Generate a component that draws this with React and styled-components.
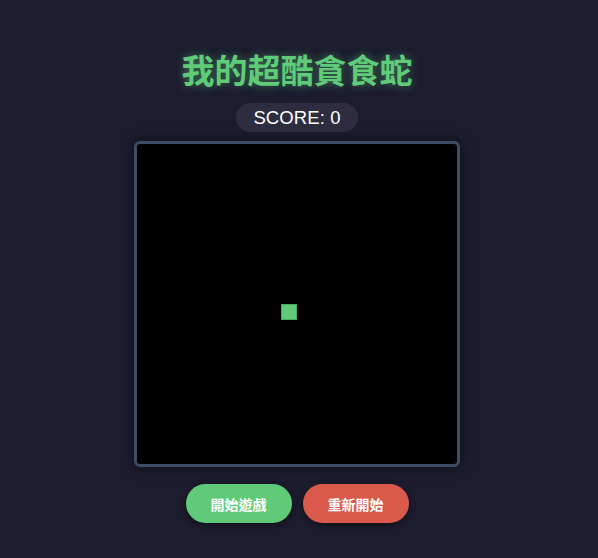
import React from "react";
import styled, { createGlobalStyle } from "styled-components";

const GlobalStyle = createGlobalStyle`
  html, body {
    margin: 0;
    padding: 0;
    background: #1c1c2e;
    font-family: "Liberation Sans", "Noto Sans CJK TC", sans-serif;
  }
`;

const Page = styled.div`
  display: flex;
  flex-direction: column;
  align-items: center;
  padding: 52px 4px 0 0;
  min-height: 558px;
  box-sizing: border-box;
`;

const Title = styled.h1`
  margin: 0;
  font-size: 33px;
  line-height: 39px;
  font-weight: 700;
  color: #5fcb79;
  text-shadow: 0 0 10px rgba(95, 203, 121, 0.5);
  font-family: "Liberation Sans", "Noto Sans CJK TC", sans-serif;
`;

const Score = styled.div`
  margin-top: 12px;
  height: 29px;
  padding: 0 17px;
  display: flex;
  align-items: center;
  border-radius: 15px;
  background: #2d2d3f;
  color: #ffffff;
  font-size: 18.5px;
  letter-spacing: 0.1px;
`;

const Board = styled.div`
  position: relative;
  margin-top: 9px;
  width: 320px;
  height: 320px;
  background: #000;
  border: 3px solid #3c4d66;
  border-radius: 6px;
  box-shadow: 0 0 14px rgba(0, 0, 0, 0.5);
`;

const Cell = styled.div`
  position: absolute;
  width: 16px;
  height: 16px;
  background: #5fcb79;
  box-shadow: inset 0 0 0 1px #4aa862;
`;

const Controls = styled.div`
  display: flex;
  gap: 11px;
  margin-top: 17px;
`;

const Button = styled.button`
  height: 39px;
  padding: 0 25px;
  border: none;
  border-radius: 20px;
  background: ${(p) => p.$bg};
  color: #fff;
  font-size: 14px;
  font-weight: 700;
  font-family: "Liberation Sans", "Noto Sans CJK TC", sans-serif;
  box-shadow: 0 2px 6px rgba(0, 0, 0, 0.45);
  cursor: pointer;
`;

export default function App() {
  const food = { x: 9, y: 10 };
  return (
    <>
      <GlobalStyle />
      <Page>
        <Title>我的超酷貪食蛇</Title>
        <Score>SCORE: 0</Score>
        <Board>
          <Cell style={{ left: food.x * 16, top: food.y * 16 }} />
        </Board>
        <Controls>
          <Button $bg="#5fcb79">開始遊戲</Button>
          <Button $bg="#d95a4a">重新開始</Button>
        </Controls>
      </Page>
    </>
  );
}
